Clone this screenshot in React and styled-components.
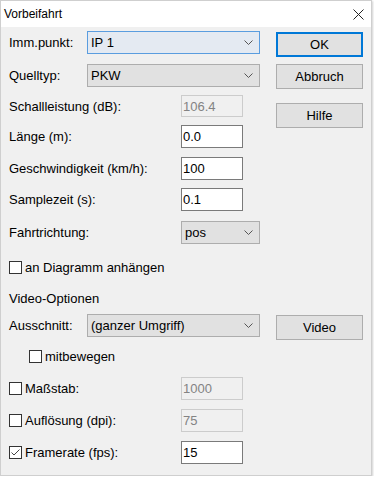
import React from 'react';
import styled, { createGlobalStyle } from 'styled-components';

const GlobalStyle = createGlobalStyle`
  html, body {
    margin: 0;
    padding: 0;
    background: #ffffff;
  }
  body {
    font-family: "Liberation Sans", Arial, sans-serif;
    font-size: 13px;
    color: #000;
  }
`;

const Window = styled.div`
  width: 372px;
  height: 476px;
  box-sizing: border-box;
  border: 1px solid #cfcfcf;
  background: #f0f0f0;
  box-shadow: 1px 1px 2px rgba(0, 0, 0, 0.18);
  display: flex;
  flex-direction: column;
`;

const TitleBar = styled.div`
  height: 26px;
  background: #fff;
  display: flex;
  align-items: center;
  justify-content: space-between;
  padding: 0 7px 0 3px;
  font-size: 12px;
`;

const Body = styled.div`
  padding: 0 8px;
  display: flex;
  flex-direction: column;
`;

const TopGrid = styled.div`
  display: grid;
  grid-template-columns: 251px 87px;
  column-gap: 16px;
`;

const Column = styled.div`
  display: flex;
  flex-direction: column;
`;

const Row = styled.div`
  display: flex;
  align-items: ${p => p.$align || 'center'};
  height: ${p => p.$h || 23}px;
  margin-top: ${p => p.$mt || 0}px;
  padding-left: ${p => p.$indent || 0}px;
`;

const Label = styled.div`
  width: ${p => p.$w}px;
  line-height: ${p => (p.$lh ? `${p.$lh}px` : 'normal')};
  flex-shrink: 0;
  white-space: nowrap;
`;

const Combo = styled.div`
  width: ${p => p.$w}px;
  height: 23px;
  box-sizing: border-box;
  display: flex;
  align-items: center;
  padding-left: 3px;
  border: 1px solid ${p => (p.$focus ? '#5a9ddf' : '#adadad')};
  background: ${p => (p.$focus ? '#e4eaf2' : '#e1e1e1')};
  white-space: nowrap;
`;

const Chevron = styled.svg`
  margin-left: auto;
  margin-right: 6px;
`;

const Field = styled.input`
  width: 62px;
  height: ${p => p.$h || 23}px;
  box-sizing: border-box;
  margin: 0;
  padding: 0 1px;
  font-family: "Liberation Sans", Arial, sans-serif;
  font-size: 13px;
  color: ${p => (p.disabled ? '#838383' : '#000')};
  background: ${p => (p.disabled ? '#f0f0f0' : '#fff')};
  border: 1px solid ${p => (p.disabled ? '#cccccc' : '#7a7a7a')};
  outline: none;
`;

const Button = styled.div`
  width: 87px;
  height: 25px;
  box-sizing: border-box;
  margin-top: ${p => p.$mt || 0}px;
  margin-left: ${p => p.$ml || 0}px;
  display: flex;
  align-items: center;
  justify-content: center;
  background: #e1e1e1;
  border: ${p => (p.$primary ? '2px solid #0078d7' : '1px solid #adadad')};
  flex-shrink: 0;
`;

const CheckLabel = styled.div`
  display: flex;
  align-items: center;
  width: ${p => (p.$w ? `${p.$w}px` : 'auto')};
  flex-shrink: 0;
  white-space: nowrap;
`;

const Box = styled.span`
  width: 13px;
  height: 13px;
  box-sizing: border-box;
  border: 1px solid #333;
  background: #fff;
  margin-right: 3px;
  display: flex;
  align-items: center;
  justify-content: center;
`;

const ChevronIcon = () => (
  <Chevron width="9" height="5" viewBox="0 0 9 5">
    <polyline points="0.5,0.5 4.5,4.5 8.5,0.5" fill="none" stroke="#555" strokeWidth="1" />
  </Chevron>
);

const Check = ({ checked, children, w }) => (
  <CheckLabel $w={w}>
    <Box>
      {checked && (
        <svg width="11" height="11" viewBox="0 0 11 11">
          <polyline points="1.5,5.5 4,8 9.5,2.5" fill="none" stroke="#444" strokeWidth="1" />
        </svg>
      )}
    </Box>
    {children}
  </CheckLabel>
);

export default function App() {
  return (
    <>
      <GlobalStyle />
      <Window>
        <TitleBar>
          <span>Vorbeifahrt</span>
          <svg width="11" height="11" viewBox="0 0 11 11">
            <path d="M0.5 0.5 L10.5 10.5 M10.5 0.5 L0.5 10.5" stroke="#222" strokeWidth="1" />
          </svg>
        </TitleBar>
        <Body>
          <TopGrid>
            <Column>
              <Row $mt={4}>
                <Label $w={78}>Imm.punkt:</Label>
                <Combo $w={174} $focus>
                  IP 1
                  <ChevronIcon />
                </Combo>
              </Row>
              <Row $mt={10}>
                <Label $w={78}>Quelltyp:</Label>
                <Combo $w={174}>
                  PKW
                  <ChevronIcon />
                </Combo>
              </Row>
              <Row $mt={8} $h={22}>
                <Label $w={172}>Schallleistung (dB):</Label>
                <Field $h={22} disabled defaultValue="106.4" />
              </Row>
              <Row $mt={8}>
                <Label $w={172}>Länge (m):</Label>
                <Field defaultValue="0.0" />
              </Row>
              <Row $mt={9}>
                <Label $w={172}>Geschwindigkeit (km/h):</Label>
                <Field defaultValue="100" />
              </Row>
              <Row $mt={8}>
                <Label $w={172}>Samplezeit (s):</Label>
                <Field defaultValue="0.1" />
              </Row>
              <Row $mt={10}>
                <Label $w={172}>Fahrtrichtung:</Label>
                <Combo $w={80}>
                  pos
                  <ChevronIcon />
                </Combo>
              </Row>
            </Column>
            <Column>
              <Button $primary $mt={5}>OK</Button>
              <Button $mt={7}>Abbruch</Button>
              <Button $mt={14}>Hilfe</Button>
            </Column>
          </TopGrid>

          <Row $mt={13} $h={20}>
            <Check>an Diagramm anhängen</Check>
          </Row>
          <Row $mt={11} $h={20}>
            <Label $w={172}>Video-Optionen</Label>
          </Row>
          <Row $mt={6} $h={26} $align="flex-start">
            <Label $w={78} $lh={23}>Ausschnitt:</Label>
            <Combo $w={174}>
              (ganzer Umgriff)
              <ChevronIcon />
            </Combo>
            <Button $mt={1} $ml={16}>Video</Button>
          </Row>
          <Row $mt={6} $h={20} $indent={20}>
            <Check>mitbewegen</Check>
          </Row>
          <Row $mt={11}>
            <Check w={172}>Maßstab:</Check>
            <Field disabled defaultValue="1000" />
          </Row>
          <Row $mt={9}>
            <Check w={172}>Auflösung (dpi):</Check>
            <Field disabled defaultValue="75" />
          </Row>
          <Row $mt={9}>
            <Check w={172} checked>Framerate (fps):</Check>
            <Field defaultValue="15" />
          </Row>
        </Body>
      </Window>
    </>
  );
}
